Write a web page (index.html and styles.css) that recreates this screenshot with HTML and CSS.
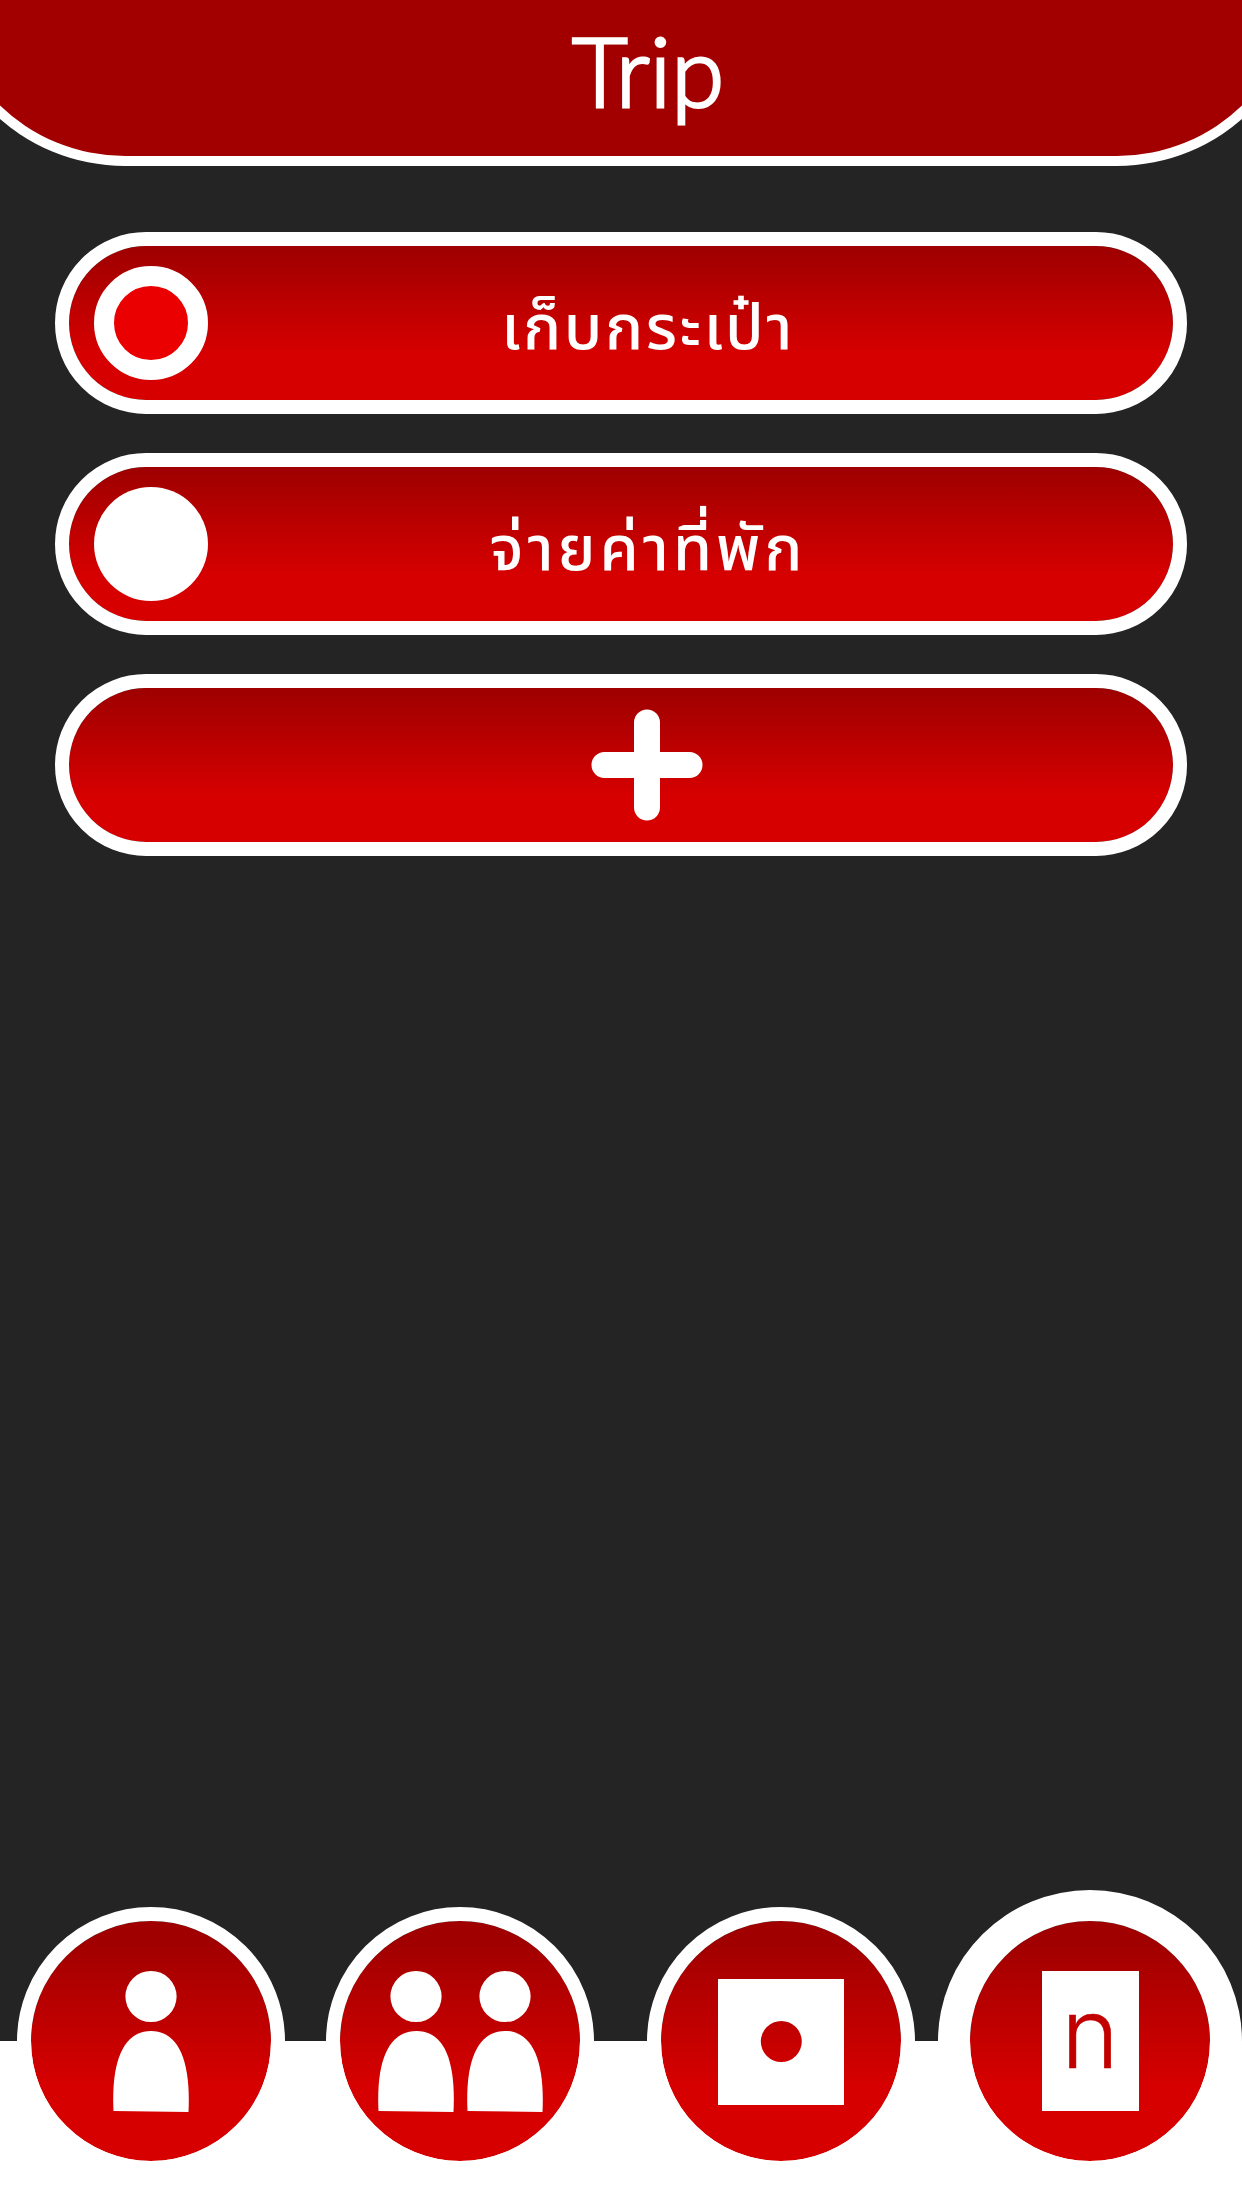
FILE: index.html
```html
<!DOCTYPE html>
<html lang="th">
<head>
<meta charset="utf-8">
<title>Trip</title>
<link rel="stylesheet" href="styles.css">
</head>
<body>
<div class="screen">
  <header class="header"><h1 class="title">Trip</h1></header>

  <main class="list">
    <div class="pill">
      <span class="radio radio-on"></span>
      <span class="label">เก็บกระเป๋า</span>
    </div>
    <div class="pill">
      <span class="radio"></span>
      <span class="label label-second">จ่ายค่าที่พัก</span>
    </div>
    <div class="pill pill-add">
      <svg class="plus" width="112" height="112" viewBox="0 0 112 112"><path d="M56 13.500v85M13.500 56h85" stroke="#fff" stroke-width="26" stroke-linecap="round"/></svg>
    </div>
  </main>

  <nav class="nav">
    <a class="tab">
      <svg width="240" height="240" viewBox="0 0 240 240" fill="#fff">
        <circle cx="120" cy="75.5" r="25.6"/>
        <path d="M82.500 190C80 139 93 110 120 110S160 139 157.500 191Z"/>
      </svg>
    </a>
    <a class="tab tab-pair">
      <svg width="240" height="240" viewBox="0 0 240 240" fill="#fff">
        <circle cx="76" cy="75.500" r="25.6"/>
        <path d="M38.500 190C36 139 49 110 76.500 110S116 139 113.500 191Z"/>
        <circle cx="165" cy="75.500" r="25.6"/>
        <path d="M127.500 190C125 139 138 110 165 110S205 139 202.500 191Z"/>
      </svg>
    </a>
    <a class="tab tab-box">
      <svg width="240" height="240" viewBox="0 0 240 240">
        <path fill="#fff" fill-rule="evenodd" d="M57 58H183V184H57ZM99.800 120.500a20.500 20.500 0 1 0 41 0a20.500 20.500 0 1 0 -41 0Z"/>
      </svg>
    </a>
    <a class="tab tab-active"><span class="card">n</span></a>
  </nav>
</div>
</body>
</html>
```
FILE: styles.css
```css
* { box-sizing: border-box; }

body {
  margin: 0;
  background: #242424;
}

.screen {
  display: flex;
  flex-direction: column;
  width: 1242px;
  height: 2208px;
  overflow: hidden;
}

.header {
  flex: none;
  height: 200px;
  margin: -34px -65px 0;
  background: #a20000;
  border: 10px solid #fff;
  border-top: 0;
  border-radius: 0 0 190px 190px;
  display: flex;
  justify-content: center;
}

.title {
  margin: 44px 0 0;
  padding-left: 54px;
  font: 300 96px/120px Lato, sans-serif;
  color: #fff;
  -webkit-text-stroke: 3px #fff;
}

.list {
  display: flex;
  flex-direction: column;
  gap: 39px;
  padding: 66px 55px 0;
}

.pill {
  display: flex;
  align-items: center;
  height: 182px;
  padding-left: 25px;
  border: 14px solid #fff;
  border-radius: 91px;
  background: linear-gradient(#a00000 3%, #d60000 70%) padding-box;
}

.radio {
  flex: none;
  width: 114px;
  height: 114px;
  border-radius: 50%;
  background: #fff;
}

.radio-on {
  border: 20px solid #fff;
  background: #ea0000;
}

.label {
  flex: 1;
  padding: 14px 85px 0 0;
  text-align: center;
  color: #fff;
  font: 500 63px/100px "Noto Sans Thai", "Noto Sans", sans-serif;
  letter-spacing: 2.5px;
  white-space: nowrap;
}

.label-second { letter-spacing: 4px; }

.pill-add {
  justify-content: center;
  padding-left: 52px;
}

.plus { display: block; }

.nav {
  display: flex;
  align-items: center;
  height: 319px;
  margin-top: auto;
  padding: 0 0 15px 17px;
  background: linear-gradient(transparent 152px, #fff 152px);
}

.tab {
  flex: none;
  width: 268px;
  height: 268px;
  border: 14px solid #fff;
  border-radius: 50%;
  background: linear-gradient(#a00000 8%, #d60000 68%) padding-box;
}

.tab svg { display: block; }

.tab-pair { margin-left: 41px; }
.tab-box { margin-left: 53px; }

.tab-active {
  display: flex;
  align-items: center;
  justify-content: center;
  width: 304px;
  height: 302px;
  margin-left: 23px;
  border-width: 31px 32px;
}

.card {
  width: 97px;
  height: 140px;
  background: #fff;
  color: #c20000;
  font: 300 98px/124px Inter, sans-serif;
  text-align: center;
  -webkit-text-stroke: 0.5px #c20000;
}
```
